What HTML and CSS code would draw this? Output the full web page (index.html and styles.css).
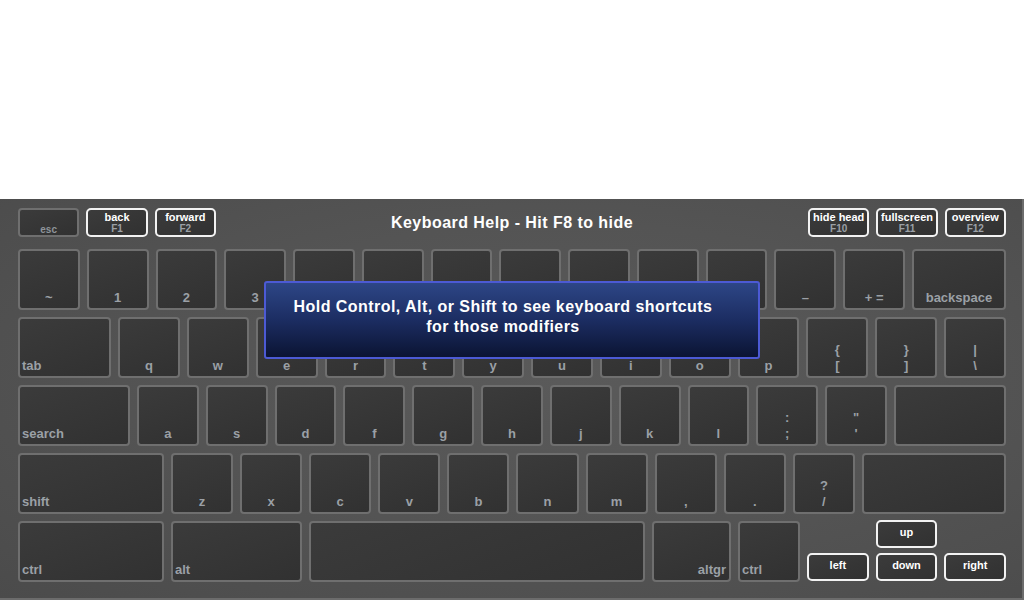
FILE: index.html
```html
<!DOCTYPE html>
<html>
<head>
<meta charset="utf-8">
<title>Keyboard Help</title>
<link rel="stylesheet" href="styles.css">
</head>
<body>
<div class="page">
  <div class="keyboard">
    <div class="toprow">
      <div class="group">
        <div class="key fkey"><span class="esc">esc</span></div>
        <div class="key fkey action"><span class="fname">back</span><span class="fnum">F1</span></div>
        <div class="key fkey action"><span class="fname">forward</span><span class="fnum">F2</span></div>
      </div>
      <div class="title">Keyboard Help - Hit F8 to hide</div>
      <div class="group">
        <div class="key fkey action"><span class="fname">hide head</span><span class="fnum">F10</span></div>
        <div class="key fkey action"><span class="fname">fullscreen</span><span class="fnum">F11</span></div>
        <div class="key fkey action"><span class="fname">overview</span><span class="fnum">F12</span></div>
      </div>
    </div>

    <div class="rows">
      <div class="row">
        <div class="key u">~</div>
        <div class="key u">1</div>
        <div class="key u">2</div>
        <div class="key u">3</div>
        <div class="key u"></div>
        <div class="key u"></div>
        <div class="key u"></div>
        <div class="key u"></div>
        <div class="key u"></div>
        <div class="key u"></div>
        <div class="key u"></div>
        <div class="key u">&ndash;</div>
        <div class="key u">+ =</div>
        <div class="key backspace">backspace</div>
      </div>
      <div class="row">
        <div class="key left tab">tab</div>
        <div class="key u">q</div>
        <div class="key u">w</div>
        <div class="key u">e</div>
        <div class="key u">r</div>
        <div class="key u">t</div>
        <div class="key u">y</div>
        <div class="key u">u</div>
        <div class="key u">i</div>
        <div class="key u">o</div>
        <div class="key u">p</div>
        <div class="key u two"><span>{</span><span>[</span></div>
        <div class="key u two"><span>}</span><span>]</span></div>
        <div class="key u two"><span>|</span><span>\</span></div>
      </div>
      <div class="row">
        <div class="key left search">search</div>
        <div class="key u">a</div>
        <div class="key u">s</div>
        <div class="key u">d</div>
        <div class="key u">f</div>
        <div class="key u">g</div>
        <div class="key u">h</div>
        <div class="key u">j</div>
        <div class="key u">k</div>
        <div class="key u">l</div>
        <div class="key u two"><span>:</span><span>;</span></div>
        <div class="key u two"><span>"</span><span>'</span></div>
        <div class="key fill"></div>
      </div>
      <div class="row">
        <div class="key left shift">shift</div>
        <div class="key u">z</div>
        <div class="key u">x</div>
        <div class="key u">c</div>
        <div class="key u">v</div>
        <div class="key u">b</div>
        <div class="key u">n</div>
        <div class="key u">m</div>
        <div class="key u">,</div>
        <div class="key u">.</div>
        <div class="key u two"><span>?</span><span>/</span></div>
        <div class="key fill rshift"></div>
      </div>
      <div class="row">
        <div class="key left shift">ctrl</div>
        <div class="key left alt">alt</div>
        <div class="key space"></div>
        <div class="key right altgr">altgr</div>
        <div class="key left rctrl">ctrl</div>
        <div class="arrows">
          <div class="key akey up">up</div>
          <div class="key akey aleft">left</div>
          <div class="key akey down">down</div>
          <div class="key akey aright">right</div>
        </div>
      </div>
    </div>

    <div class="overlay">
      <p>Hold Control, Alt, or Shift to see keyboard shortcuts<br>for those modifiers</p>
    </div>
  </div>
</div>
</body>
</html>
```

FILE: styles.css
```css
html, body {
  margin: 0;
  padding: 0;
  background: #ffffff;
}

.page {
  width: 1024px;
  height: 600px;
  display: flex;
  flex-direction: column;
  justify-content: flex-end;
  font-family: "Liberation Sans", Arial, sans-serif;
}

.keyboard {
  position: relative;
  height: 390px;
  box-sizing: content-box;
  padding: 9px 16px 0 18px;
  border-right: 2px solid #6c6c6c;
  border-bottom: 2px solid #6c6c6c;
  width: 988px;
  background: radial-gradient(ellipse at 55% 45%, #5a5a5a 0%, #545454 50%, #4b4b4b 100%);
}

.toprow {
  display: flex;
  align-items: center;
  height: 29px;
  margin-bottom: 12px;
}

.group {
  display: flex;
  gap: 7px;
  width: 198px;
}

.title {
  flex: 1;
  text-align: center;
  color: #ffffff;
  font-weight: bold;
  font-size: 16px;
  letter-spacing: 0.45px;
}

.key {
  box-sizing: border-box;
  border: 2px solid #6f6f6f;
  border-radius: 4px;
  background: linear-gradient(160deg, #3b3b3b 0%, #353535 60%, #313131 100%);
  color: #9ba0a6;
  font-weight: bold;
  font-size: 13px;
  display: flex;
  align-items: flex-end;
  justify-content: center;
  padding: 0 4px 3px;
  line-height: 15px;
}

.fkey {
  width: 62px;
  height: 29px;
  flex-direction: column;
  align-items: center;
  justify-content: flex-start;
  padding: 2px 2px 0;
}

.fkey .esc {
  font-size: 10px;
  color: #8e949a;
  margin-top: 10px;
}

.action {
  border-color: #f2f2f2;
  border-radius: 5px;
}

.fname {
  color: #ffffff;
  font-size: 11px;
  line-height: 11px;
}

.fnum {
  color: #9ba0a6;
  font-size: 10px;
  line-height: 11px;
}

.rows {
  display: flex;
  flex-direction: column;
  gap: 7px;
}

.row {
  display: flex;
  gap: 7px;
  height: 61px;
}

.u {
  flex: 1 1 0;
  min-width: 0;
}

.two {
  flex-direction: column;
  align-items: center;
  justify-content: flex-end;
  line-height: 16px;
  padding-bottom: 2px;
}

.left {
  justify-content: flex-start;
  padding-left: 2px;
}

.right {
  justify-content: flex-end;
  padding-right: 3px;
}

.backspace { width: 94px; }
.tab { width: 93px; }
.search { width: 112px; }
.fill { width: 112px; }
.shift { width: 146px; }
.rshift { width: 144px; }
.alt { width: 131px; }
.space { width: 336px; }
.altgr { width: 79px; }
.rctrl { width: 62px; }

.arrows {
  flex: 1;
  display: grid;
  grid-template-columns: 1fr 1fr 1fr;
  grid-template-rows: 28px 28px;
  column-gap: 7px;
  row-gap: 5px;
  margin-top: -1px;
}

.akey {
  border-color: #f2f2f2;
  border-radius: 5px;
  color: #ffffff;
  font-size: 11px;
  align-items: flex-start;
  padding: 3px 2px 0;
  line-height: 14px;
}

.up { grid-column: 2; grid-row: 1; }
.aleft { grid-column: 1; grid-row: 2; }
.down { grid-column: 2; grid-row: 2; }
.aright { grid-column: 3; grid-row: 2; }

.overlay {
  position: absolute;
  left: 264px;
  top: 82px;
  width: 496px;
  height: 78px;
  box-sizing: border-box;
  border: 2px solid #4c5ad4;
  border-radius: 3px;
  background: linear-gradient(180deg, #2d4686 0%, #1c2d62 50%, #0b1433 100%);
  display: flex;
  justify-content: center;
  padding: 0 18px 0 0;
}

.overlay p {
  margin: 14px 0 0;
  color: #ffffff;
  font-weight: bold;
  font-size: 16px;
  line-height: 20px;
  letter-spacing: 0.45px;
  text-align: center;
}
```
